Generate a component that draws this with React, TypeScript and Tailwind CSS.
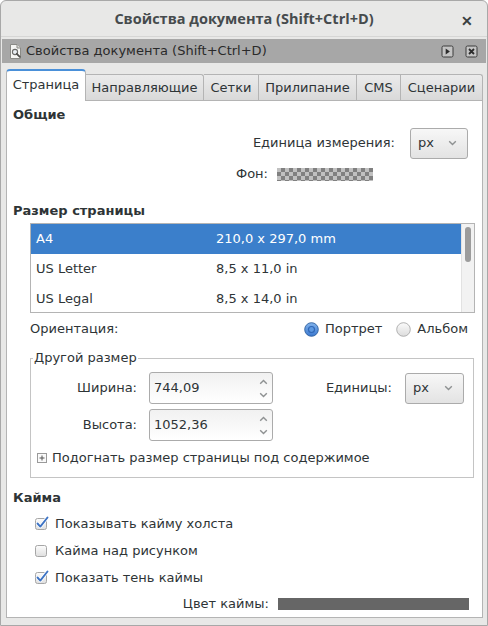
import React from "react";

const ROWS = [
  { name: "A4", size: "210,0 x 297,0 mm", selected: true },
  { name: "US Letter", size: "8,5 x 11,0 in", selected: false },
  { name: "US Legal", size: "8,5 x 14,0 in", selected: false },
];

const TABS = [
  { label: "Сетки", w: "w-[55px]" },
  { label: "Прилипание", w: "w-[98px]" },
  { label: "CMS", w: "w-[44px]" },
  { label: "Сценарии", w: "w-[82px]" },
];

function Chevron({ up = false }: { up?: boolean }) {
  return (
    <svg width="9" height="6" viewBox="0 0 9 6">
      <path
        d={up ? "M1.2 4.8 L4.5 1.5 L7.8 4.8" : "M1.2 1.2 L4.5 4.5 L7.8 1.2"}
        fill="none"
        stroke="#8e9192"
        strokeWidth="1.4"
      />
    </svg>
  );
}

function Combo({ className }: { className: string }) {
  return (
    <div
      className={`flex h-[31px] items-center justify-between rounded-[3px] border border-[#ababab] bg-gradient-to-b from-[#f7f7f7] to-[#e3e3e3] pl-[7px] pr-[10px] ${className}`}
    >
      <span>px</span>
      <Chevron />
    </div>
  );
}

function Spin({ value }: { value: string }) {
  return (
    <div className="flex h-[32px] w-[124px] items-center rounded-[3px] border border-[#ababab] bg-gradient-to-b from-[#f1f1f1] to-white pl-[4px]">
      <span className="flex-1">{value}</span>
      <div className="flex w-[17px] flex-col items-center gap-[7px]">
        <Chevron up />
        <Chevron />
      </div>
    </div>
  );
}

function Radio({ checked }: { checked: boolean }) {
  return (
    <svg width="15" height="15" viewBox="0 0 15 15">
      <defs>
        <linearGradient id="radOn" x1="0" y1="0" x2="0" y2="1">
          <stop offset="0" stopColor="#82b3ec" />
          <stop offset="1" stopColor="#3a78cf" />
        </linearGradient>
        <linearGradient id="radOff" x1="0" y1="0" x2="0" y2="1">
          <stop offset="0" stopColor="#fbfbfb" />
          <stop offset="1" stopColor="#dcdcdc" />
        </linearGradient>
      </defs>
      {checked ? (
        <>
          <circle cx="7.5" cy="7.5" r="6.8" fill="url(#radOn)" stroke="#2c5f9e" strokeWidth="0.9" />
          <circle cx="7.5" cy="7.5" r="3.6" fill="#2f67b6" />
          <circle cx="7.5" cy="7.5" r="2.4" fill="#5d98e0" />
        </>
      ) : (
        <circle cx="7.5" cy="7.5" r="6.8" fill="url(#radOff)" stroke="#a9a9a9" strokeWidth="0.9" />
      )}
    </svg>
  );
}

function Check({ checked }: { checked: boolean }) {
  return (
    <svg width="15" height="15" viewBox="0 0 15 15" className="shrink-0">
      <defs>
        <linearGradient id="chkBg" x1="0" y1="0" x2="0" y2="1">
          <stop offset="0" stopColor="#fdfdfd" />
          <stop offset="1" stopColor="#dedede" />
        </linearGradient>
      </defs>
      <rect x="1.5" y="2.5" width="11" height="11" rx="2" fill="url(#chkBg)" stroke="#a6a6a6" />
      {checked && (
        <>
          <path d="M3.5 7.5 L6.3 10.6 L13.5 1.5" fill="none" stroke="#ffffff" strokeWidth="3.4" strokeLinecap="round" strokeLinejoin="round" />
          <path d="M3.5 7.5 L6.3 10.6 L13.5 1.5" fill="none" stroke="#3d73c4" strokeWidth="1.9" strokeLinecap="round" strokeLinejoin="round" />
        </>
      )}
    </svg>
  );
}

function DocIcon() {
  return (
    <svg width="15" height="17" viewBox="0 0 15 17">
      <path d="M2.5 1.5 H9 L12.5 5 V15.5 H2.5 Z" fill="#f6f6f4" stroke="#8a8a86" />
      <path d="M9 1.5 V5 H12.5" fill="#dcdcd8" stroke="#8a8a86" />
      <circle cx="7" cy="9" r="2.6" fill="#e9eef3" stroke="#6c6c6a" strokeWidth="1.1" />
      <path d="M8.8 10.8 L11.8 13.8" stroke="#4e4e4c" strokeWidth="1.8" strokeLinecap="round" />
    </svg>
  );
}

function SmallBoxIcon({ kind }: { kind: "play" | "close" }) {
  return (
    <svg width="13" height="13" viewBox="0 0 13 13">
      <rect x="1" y="1" width="11" height="11" rx="1.5" fill="#c4c4c4" stroke="#3d3d3d" />
      {kind === "play" ? (
        <path d="M4.7 3.6 L8.9 6.5 L4.7 9.4 Z" fill="#2c2c2c" />
      ) : (
        <path d="M4 4 L9 9 M9 4 L4 9" stroke="#2c2c2c" strokeWidth="1.8" />
      )}
    </svg>
  );
}

export default function App() {
  return (
    <div className="h-[626px] w-[488px] overflow-hidden bg-white font-['DejaVu_Sans',sans-serif] text-[13px] text-[#2e3436]">
      <div className="flex h-[626px] flex-col rounded-t-[6px] border border-[#a8a8a8] bg-[#e8e8e7]">
        {/* title bar */}
        <div className="relative flex h-[36px] shrink-0 items-center justify-center border-b border-[#d6d6d5] font-['Open_Sans',sans-serif] text-[14.5px] font-bold text-[#464b4d]">
          Свойства документа (Shift+Ctrl+D)
          <span className="absolute right-[14px] top-[9px] text-[14px] font-bold text-[#3a3f41]">✕</span>
        </div>

        {/* dock header */}
        <div className="mx-[1px] mt-[2px] flex h-[24px] shrink-0 items-center bg-[#a7a7a7] pl-[6px] pr-[8px] text-[#2a2a2a]">
          <DocIcon />
          <span className="ml-[3px] flex-1 text-[13px]">Свойства документа (Shift+Ctrl+D)</span>
          <SmallBoxIcon kind="play" />
          <span className="w-[11px]" />
          <SmallBoxIcon kind="close" />
        </div>

        {/* tabs */}
        <div className="ml-[5px] flex h-[37px] shrink-0 items-end pt-[6px]">
          <div className="relative z-10 -mb-px flex h-[32px] w-[80px] items-center justify-center rounded-t-[4px] border-x border-t-2 border-x-[#b4b4b4] border-t-[#4a90d9] bg-white pb-[2px]">
            Страница
          </div>
          <div className="flex h-[26px] w-[118px] items-center justify-center rounded-tr-[3px] border-r border-t border-[#b4b4b4] bg-gradient-to-b from-[#ebebeb] to-[#d9d9d9]">
            Направляющие
          </div>
          {TABS.map((t, i) => (
            <div
              key={t.label}
              className={`flex h-[26px] ${t.w} items-center justify-center border-r border-t border-[#b4b4b4] bg-gradient-to-b from-[#ebebeb] to-[#d9d9d9] ${i === TABS.length - 1 ? "rounded-tr-[3px]" : ""}`}
            >
              {t.label}
            </div>
          ))}
        </div>

        {/* page */}
        <div className="ml-[5px] flex w-[477px] flex-col border border-[#b4b4b4] bg-white">
          <div className="flex h-[27px] items-center pl-[6px] font-bold">Общие</div>

          <div className="flex h-[30px] items-center justify-end pr-[14px]">
            <span>Единица измерения:</span>
            <Combo className="ml-[15px] w-[58px]" />
          </div>

          <div className="mt-[3px] flex h-[26px] items-center justify-end pr-[109px]">
            <span>Фон:</span>
            <div className="ml-[9px] h-[13px] w-[96px] bg-[conic-gradient(#808080_25%,#c0c0c0_0_50%,#808080_0_75%,#c0c0c0_0)] bg-[length:8px_8px]" />
          </div>

          <div className="mt-[12px] flex h-[24px] items-center pl-[6px] font-bold">Размер страницы</div>

          <div className="ml-[23px] flex h-[90px] w-[445px] border border-[#b4b4b4]">
            <div className="flex flex-1 flex-col overflow-hidden">
              {ROWS.map((r) => (
                <div
                  key={r.name}
                  className={`flex h-[30px] shrink-0 items-center pl-[5px] ${r.selected ? "bg-[#3b7fcb] text-white" : ""}`}
                >
                  <span className="w-[180px]">{r.name}</span>
                  <span>{r.size}</span>
                </div>
              ))}
            </div>
            <div className="flex w-[13px] justify-center border-l border-[#e2e2e2] bg-[#f2f2f2] pt-[3px]">
              <div className="h-[35px] w-[6px] rounded-full bg-[#9c9c9c]" />
            </div>
          </div>

          <div className="flex h-[32px] items-center pl-[23px] pr-[14px]">
            <span className="flex-1">Ориентация:</span>
            <Radio checked />
            <span className="ml-[6px]">Портрет</span>
            <span className="ml-[14px]"><Radio checked={false} /></span>
            <span className="ml-[6px]">Альбом</span>
          </div>

          <fieldset className="ml-[23px] mt-[5px] w-[444px] border border-[#c4c4c4] px-0 pb-[7px] pt-[6px]">
            <legend className="ml-[2px] px-[1px] leading-[16px]">Другой размер</legend>
            <div className="flex h-[32px] items-center pr-[9px]">
              <span className="w-[106px] text-right">Ширина:</span>
              <span className="ml-[12px]"><Spin value="744,09" /></span>
              <span className="flex-1 text-right">Единицы:</span>
              <Combo className="ml-[13px] w-[59px]" />
            </div>
            <div className="mt-[5px] flex h-[32px] items-center">
              <span className="w-[106px] text-right">Высота:</span>
              <span className="ml-[12px]"><Spin value="1052,36" /></span>
            </div>
            <div className="mt-[5px] flex h-[24px] items-center pl-[6px]">
              <svg width="10" height="10" viewBox="0 0 10 10">
                <rect x="0.5" y="0.5" width="9" height="9" fill="#fafafa" stroke="#9a9a9a" />
                <path d="M2.5 5 H7.5 M5 2.5 V7.5" stroke="#555" />
              </svg>
              <span className="ml-[5px]">Подогнать размер страницы под содержимое</span>
            </div>
          </fieldset>

          <div className="mt-[8px] flex h-[24px] items-center pl-[6px] font-bold">Кайма</div>

          {[
            { label: "Показывать кайму холста", on: true },
            { label: "Кайма над рисунком", on: false },
            { label: "Показать тень каймы", on: true },
          ].map((c) => (
            <div key={c.label} className="flex h-[27px] items-center pl-[27px]">
              <Check checked={c.on} />
              <span className="ml-[6px]">{c.label}</span>
            </div>
          ))}

          <div className="flex h-[26px] items-center justify-end pr-[13px]">
            <span>Цвет каймы:</span>
            <div className="ml-[9px] h-[12px] w-[191px] bg-[#666666]" />
          </div>
        </div>
      </div>
    </div>
  );
}
